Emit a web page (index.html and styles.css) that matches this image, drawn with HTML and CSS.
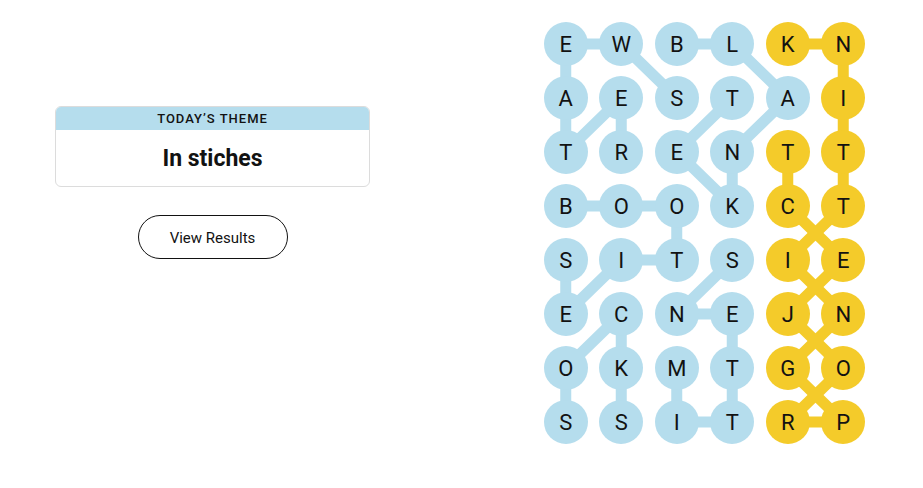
FILE: index.html
```html
<!DOCTYPE html>
<html>
<head>
  <title>Strands</title>
  <link rel="stylesheet" href="styles.css">
</head>
<body>
  <div id="page">
    <!--theme-->
    <div id="sidePanel">
      <div class="themeCard">
        <div class="themeLabel">TODAY’S THEME</div>
        <div class="themeText">In stiches</div>
      </div>
      <button class="resultsButton">View Results</button>
    </div>
    <!--board-->
    <div id="board">
      <svg class="paths" width="333" height="432" viewBox="0 0 333 432">
        <g class="blueLine">
          <line x1="27.75" y1="27" x2="83.25" y2="27"/>
          <line x1="27.75" y1="27" x2="27.75" y2="81"/>
          <line x1="27.75" y1="81" x2="27.75" y2="135"/>
          <line x1="83.25" y1="27" x2="138.75" y2="81"/>
          <line x1="83.25" y1="81" x2="27.75" y2="135"/>
          <line x1="83.25" y1="81" x2="83.25" y2="135"/>
          <line x1="138.75" y1="27" x2="194.25" y2="27"/>
          <line x1="194.25" y1="27" x2="249.75" y2="81"/>
          <line x1="194.25" y1="81" x2="138.75" y2="135"/>
          <line x1="249.75" y1="81" x2="194.25" y2="135"/>
          <line x1="138.75" y1="135" x2="194.25" y2="189"/>
          <line x1="194.25" y1="135" x2="194.25" y2="189"/>
          <line x1="27.75" y1="189" x2="138.75" y2="189"/>
          <line x1="138.75" y1="189" x2="138.75" y2="243"/>
          <line x1="27.75" y1="243" x2="27.75" y2="297"/>
          <line x1="83.25" y1="243" x2="27.75" y2="297"/>
          <line x1="83.25" y1="243" x2="138.75" y2="243"/>
          <line x1="194.25" y1="243" x2="138.75" y2="297"/>
          <line x1="138.75" y1="297" x2="194.25" y2="297"/>
          <line x1="83.25" y1="297" x2="27.75" y2="351"/>
          <line x1="83.25" y1="297" x2="83.25" y2="351"/>
          <line x1="194.25" y1="297" x2="194.25" y2="405"/>
          <line x1="27.75" y1="351" x2="27.75" y2="405"/>
          <line x1="83.25" y1="351" x2="83.25" y2="405"/>
          <line x1="138.75" y1="351" x2="138.75" y2="405"/>
          <line x1="138.75" y1="405" x2="194.25" y2="405"/>
        </g>
        <g class="yellowLine">
          <line x1="249.75" y1="27" x2="305.25" y2="27"/>
          <line x1="305.25" y1="27" x2="305.25" y2="189"/>
          <line x1="249.75" y1="135" x2="249.75" y2="189"/>
          <line x1="305.25" y1="189" x2="249.75" y2="243"/>
          <line x1="249.75" y1="189" x2="305.25" y2="243"/>
          <line x1="249.75" y1="243" x2="305.25" y2="297"/>
          <line x1="305.25" y1="243" x2="249.75" y2="297"/>
          <line x1="305.25" y1="297" x2="249.75" y2="351"/>
          <line x1="249.75" y1="297" x2="305.25" y2="351"/>
          <line x1="249.75" y1="351" x2="305.25" y2="405"/>
          <line x1="305.25" y1="351" x2="249.75" y2="405"/>
          <line x1="249.75" y1="405" x2="305.25" y2="405"/>
        </g>
      </svg>
      <div class="letter">E</div><div class="letter">W</div><div class="letter">B</div><div class="letter">L</div><div class="letter spangram">K</div><div class="letter spangram">N</div>
      <div class="letter">A</div><div class="letter">E</div><div class="letter">S</div><div class="letter">T</div><div class="letter">A</div><div class="letter spangram">I</div>
      <div class="letter">T</div><div class="letter">R</div><div class="letter">E</div><div class="letter">N</div><div class="letter spangram">T</div><div class="letter spangram">T</div>
      <div class="letter">B</div><div class="letter">O</div><div class="letter">O</div><div class="letter">K</div><div class="letter spangram">C</div><div class="letter spangram">T</div>
      <div class="letter">S</div><div class="letter">I</div><div class="letter">T</div><div class="letter">S</div><div class="letter spangram">I</div><div class="letter spangram">E</div>
      <div class="letter">E</div><div class="letter">C</div><div class="letter">N</div><div class="letter">E</div><div class="letter spangram">J</div><div class="letter spangram">N</div>
      <div class="letter">O</div><div class="letter">K</div><div class="letter">M</div><div class="letter">T</div><div class="letter spangram">G</div><div class="letter spangram">O</div>
      <div class="letter">S</div><div class="letter">S</div><div class="letter">I</div><div class="letter">T</div><div class="letter spangram">R</div><div class="letter spangram">P</div>
    </div>
  </div>
</body>
</html>
```

FILE: styles.css
```css
  html, body {
    margin: 0;
    padding: 0;
    background-color: #fff;
    font-family: Roboto, "Liberation Sans", sans-serif;
    color: #121212;
  }
  #page {
    display: flex;
    padding-top: 17px;
  }
  #sidePanel {
    width: 315px;
    margin-left: 55px;
    margin-top: 89px;
    display: flex;
    flex-direction: column;
    align-items: center;
  }
  .themeCard {
    width: 100%;
    box-sizing: border-box;
    border: 1px solid #dcdcdc;
    border-radius: 6px;
    overflow: hidden;
  }
  .themeLabel {
    background-color: #b5dded;
    height: 23px;
    line-height: 24px;
    text-align: center;
    font-size: 13px;
    font-weight: 500;
    letter-spacing: 1px;
  }
  .themeText {
    height: 56px;
    line-height: 58px;
    text-align: center;
    font-size: 23px;
    font-weight: 700;
  }
  .resultsButton {
    margin-top: 28px;
    padding-top: 3px;
    width: 150px;
    height: 44px;
    border: 1px solid #121212;
    border-radius: 22px;
    background-color: #fff;
    font-family: Roboto, "Liberation Sans", sans-serif;
    font-size: 15px;
    color: #121212;
    cursor: pointer;
  }
  #board {
    position: relative;
    margin-left: 168px;
    display: grid;
    grid-template-columns: repeat(6, 55.5px);
    grid-auto-rows: 54px;
    place-items: center;
  }
  .paths {
    position: absolute;
    top: 0;
    left: 0;
  }
  .paths line {
    stroke-width: 11;
    stroke-linecap: round;
  }
  .blueLine {
    stroke: #b5dded;
  }
  .yellowLine {
    stroke: #f4cb2a;
  }
  .letter {
    position: relative;
    width: 44px;
    height: 44px;
    border-radius: 50%;
    background-color: #b5dded;
    display: flex;
    align-items: center;
    justify-content: center;
    font-size: 22px;
    color: #121212;
  }
  .spangram {
    background-color: #f4cb2a;
  }
```
